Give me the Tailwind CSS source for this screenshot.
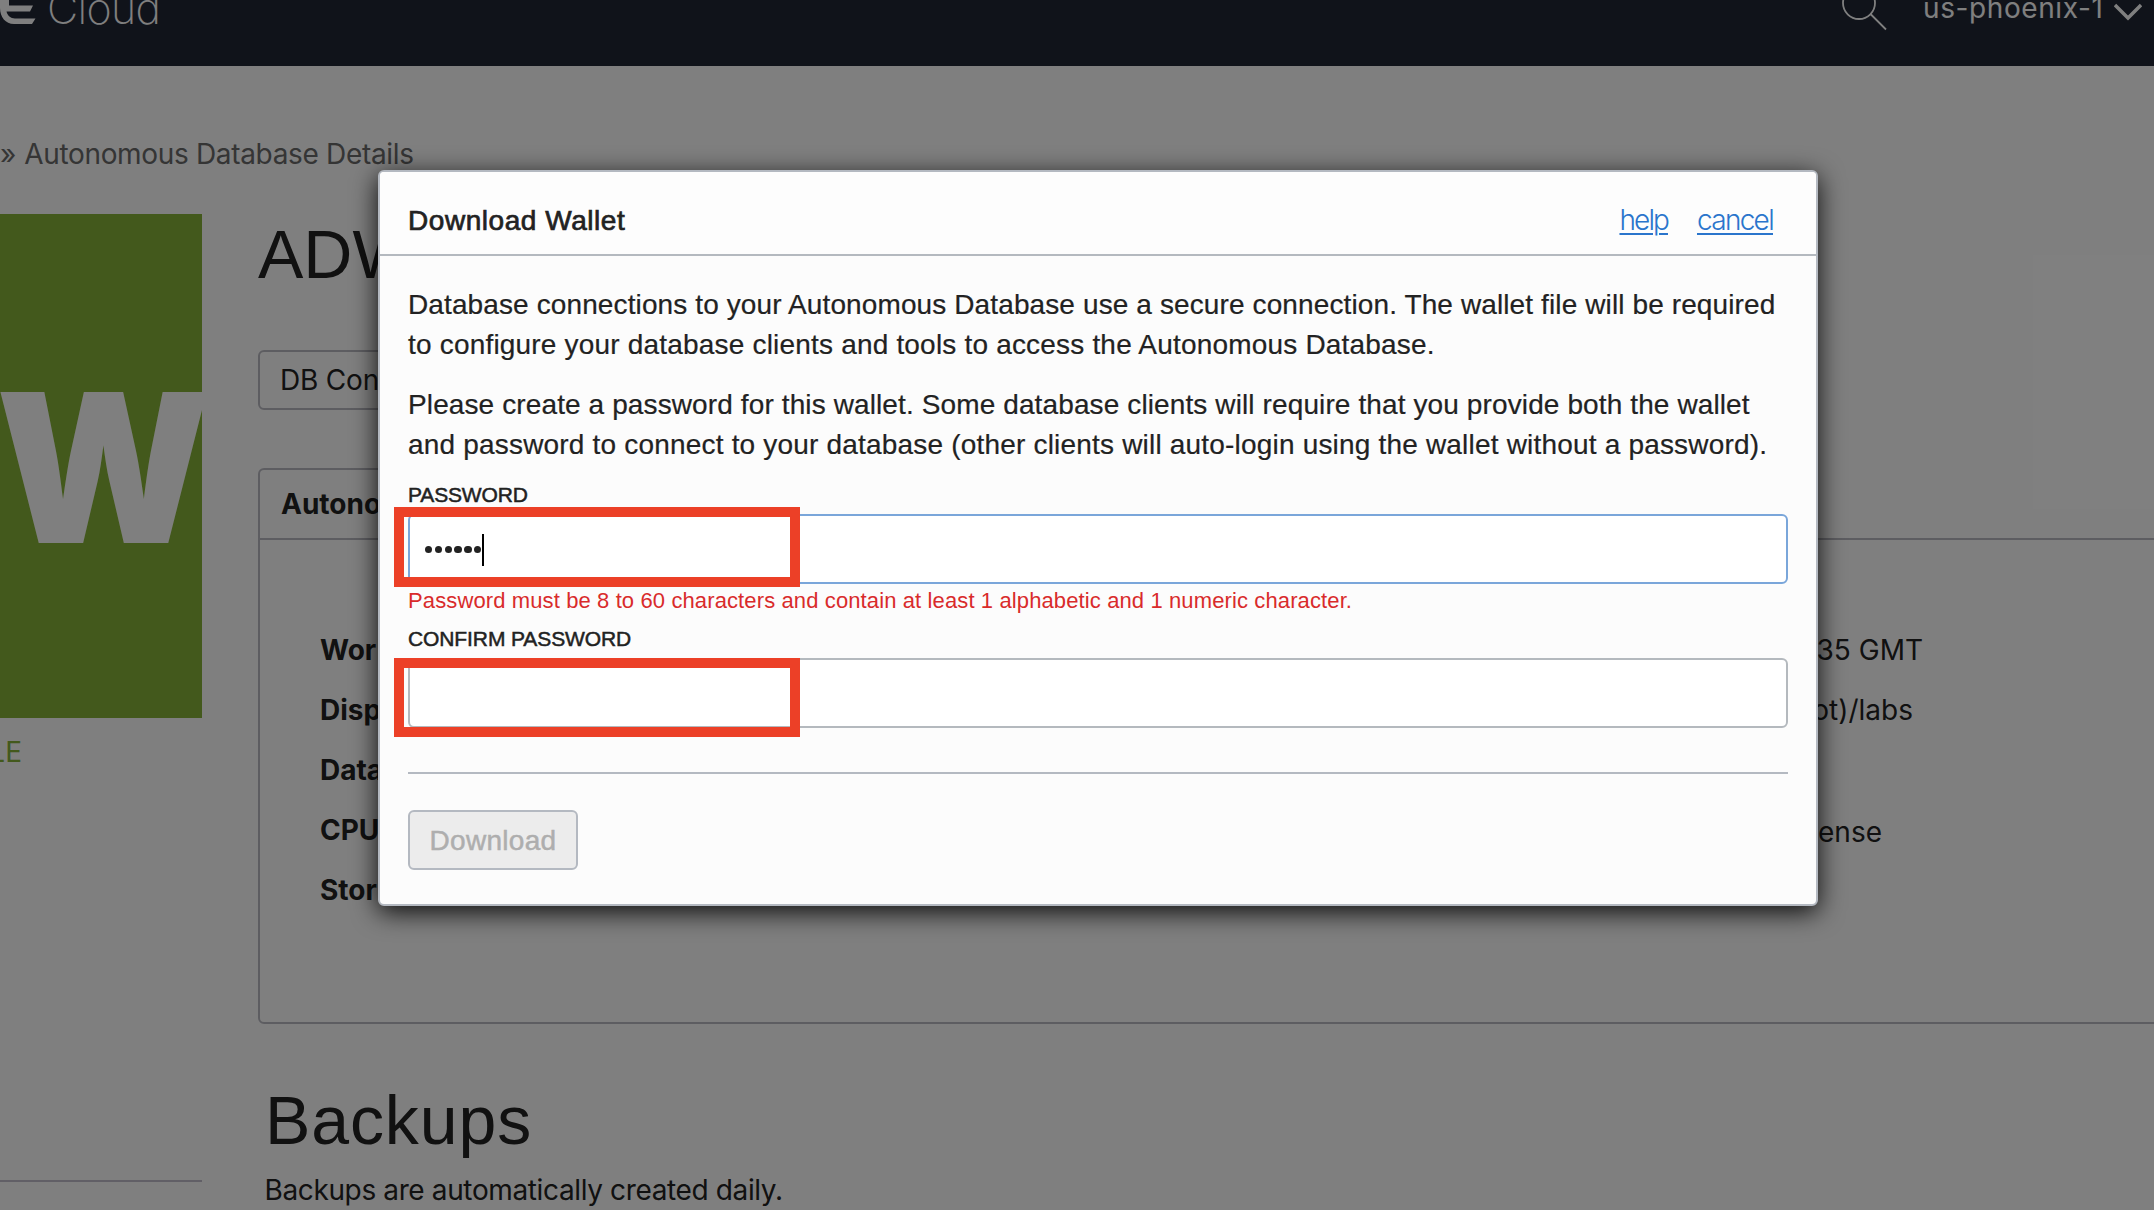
<!DOCTYPE html>
<html lang="en">
<head>
<meta charset="utf-8">
<title>Autonomous Database Details</title>
<script src="https://cdn.jsdelivr.net/npm/@tailwindcss/browser@4"></script>
</head>
<body class="bg-white">
<div class="relative w-[2154px] h-[1210px] overflow-hidden bg-white text-[#222] font-['Inter',sans-serif] text-[28px] leading-[40px]">

  <header class="flex h-[66px] bg-[#202634] text-white overflow-hidden">
    <svg class="w-[47px] h-[66px] shrink-0" viewBox="0 0 47 66" fill="#fff">
      <path d="M9 5.5H33L30 11.500H6.500C7.500 15.500 10.500 18.500 15 18.500H35.500L32 24H14C5.500 24 0 17 0 8V-5H9Z"/>
    </svg>
    <div class="-mt-[22px] text-[43px] leading-[60px] font-extralight tracking-[-0.7px]">Cloud</div>
    <div class="ml-auto flex mr-[12px]">
      <svg class="w-[50px] h-[40px] mr-[32px]" viewBox="0 0 50 40" fill="none" stroke="#fff" stroke-width="1.8">
        <circle cx="18" cy="3" r="16"/><path d="M29.500 14L45 29.500"/>
      </svg>
      <div class="-mt-[12px] w-[191px] tracking-[0.6px]">us-phoenix-1</div>
      <svg class="w-[28px] h-[30px]" viewBox="0 0 28 30" fill="none" stroke="#fff" stroke-width="3.4"><path d="M1 5L14 18L27 5"/></svg>
    </div>
  </header>

  <nav class="mt-[68px] h-[80px] text-[#6a6a6a] whitespace-pre"><span>» </span><span class="tracking-[-0.33px]">Autonomous Database Details</span></nav>

  <div class="flex">
    <aside class="w-[202px] shrink-0">
      <div class="h-[504px] bg-[#86b238] overflow-hidden text-white font-black text-[207px] leading-[508px]"><span class="inline-block origin-left scale-x-[0.96] -translate-x-[4px]">W</span></div>
      <div class="mt-[14px] w-[22px] flex justify-end text-[#86b238]"><span>AVAILABLE</span></div>
      <div class="mt-[408px] border-t-2 border-[#c2bfcc]"></div>
    </aside>
    <main class="ml-[56px] w-[2000px] shrink-0">
      <h1 class="font-['Liberation_Sans',sans-serif] text-[68px] leading-[80px]">ADW</h1>
      <div class="mt-[56px] w-[210px] h-[60px] border-2 border-[#bbbbc3] rounded-[6px] pl-[20px] leading-[56px] tracking-[-0.2px] whitespace-nowrap">DB Con</div>
      <div class="mt-[58px] w-[520px] h-[70px] border-2 border-b-0 border-[#bbbbc3] rounded-t-[6px] pl-[21px] pt-[14px] font-bold">Autono</div>
      <div class="h-[486px] border-2 border-[#bbbbc3] rounded-b-[6px] pl-[60px] pt-[80px] leading-[60px]">
        <div class="flex"><b class="w-[1100px]">Workload</b><span class="w-[503px] text-right">35 GMT</span></div>
        <div class="flex"><b class="w-[1100px]">Display</b><span class="w-[493px] text-right">(root)/labs</span></div>
        <div class="flex"><b class="w-[1100px]">Database</b></div>
        <div class="flex h-[60px]"><b class="w-[1100px]">CPU</b><span class="w-[462px] text-right pt-[2px]">License</span></div>
        <div class="flex"><b class="w-[1097px]">Stor</b><b>Tags</b></div>
      </div>
      <h2 class="mt-[56px] ml-[7px] font-['Liberation_Sans',sans-serif] text-[68px] leading-[80px] tracking-[0.9px]">Backups</h2>
      <p class="mt-[10px] ml-[6.500px] tracking-[-0.37px]">Backups are automatically created daily.</p>
    </main>
  </div>

  <div class="absolute inset-0 bg-black/50"></div>

  <section class="absolute left-[378px] top-[170px] w-[1440px] h-[736px] bg-[#fcfcfc] border-2 border-[#b4b9c1] rounded-[6px] shadow-[0_6px_26px_rgba(0,0,0,0.9)] font-['Liberation_Sans',sans-serif]">
    <div class="flex h-[84px] px-[28px] border-b-2 border-[#b4b9bf] bg-[#fdfdfd] rounded-t-[4px]">
      <h3 class="pt-[29px] tracking-[0.55px] [-webkit-text-stroke:0.7px_#222]">Download Wallet</h3>
      <div class="ml-auto pt-[28px] mr-[15px] flex gap-[29px] font-['Inter',sans-serif] font-light text-[#2a75cc]">
        <a class="underline decoration-2 underline-offset-[3px] tracking-[-1.9px]">help</a><a class="underline decoration-2 underline-offset-[3px] tracking-[-1.7px]">cancel</a>
      </div>
    </div>
    <div class="px-[28px] pt-[29px]">
      <p class="whitespace-nowrap [-webkit-text-stroke:0.2px_#222]"><span class="tracking-[0.115px]">Database connections to your Autonomous Database use a secure connection. The wallet file will be required</span><br><span class="tracking-[0.19px]">to configure your database clients and tools to access the Autonomous Database.</span></p>
      <p class="mt-[20px] whitespace-nowrap [-webkit-text-stroke:0.2px_#222]"><span class="tracking-[0.115px]">Please create a password for this wallet. Some database clients will require that you provide both the wallet</span><br><span class="tracking-[0.19px]">and password to connect to your database (other clients will auto-login using the wallet without a password).</span></p>
      <div class="mt-[15px] h-[30px] text-[21px] leading-[30px] tracking-[-0.15px] [-webkit-text-stroke:0.5px_#222]">PASSWORD</div>
      <div class="mt-[4px] relative h-[70px] border-2 border-[#7aa6da] rounded-[6px] bg-white flex items-center pl-[15px]">
        <div class="flex gap-[2.4px] mt-px">
          <i class="size-[7.4px] rounded-full bg-[#222]"></i><i class="size-[7.4px] rounded-full bg-[#222]"></i><i class="size-[7.4px] rounded-full bg-[#222]"></i><i class="size-[7.4px] rounded-full bg-[#222]"></i><i class="size-[7.4px] rounded-full bg-[#222]"></i><i class="size-[7.4px] rounded-full bg-[#222]"></i>
        </div>
        <i class="ml-px mt-[2px] w-[2px] h-[32px] bg-black"></i>
        <div class="absolute -left-[16px] -top-[9px] w-[406px] h-[80px] border-[10px] border-[#ec4027]"></div>
      </div>
      <div class="mt-[2px] h-[30px] text-[22px] leading-[30px] tracking-[0.117px] text-[#d92b2b] whitespace-nowrap">Password must be 8 to 60 characters and contain at least 1 alphabetic and 1 numeric character.</div>
      <div class="mt-[8px] h-[30px] text-[21px] leading-[30px] tracking-[-0.1px] [-webkit-text-stroke:0.5px_#222]">CONFIRM PASSWORD</div>
      <div class="mt-[4px] relative h-[70px] border-2 border-[#b4b9be] rounded-[6px] bg-white">
        <div class="absolute -left-[16px] -top-[2px] w-[406px] h-[79px] border-[10px] border-[#ec4027]"></div>
      </div>
      <div class="mt-[44px] border-t-2 border-[#b4b9c1]"></div>
      <div class="mt-[36px] w-[170px] h-[60px] border-2 border-[#b4b9c1] rounded-[6px] bg-[#ececec] text-[#aeaeae] text-center leading-[57px] tracking-[0.3px] [-webkit-text-stroke:0.5px_#aeaeae]">Download</div>
    </div>
  </section>
</div>
</body>
</html>
